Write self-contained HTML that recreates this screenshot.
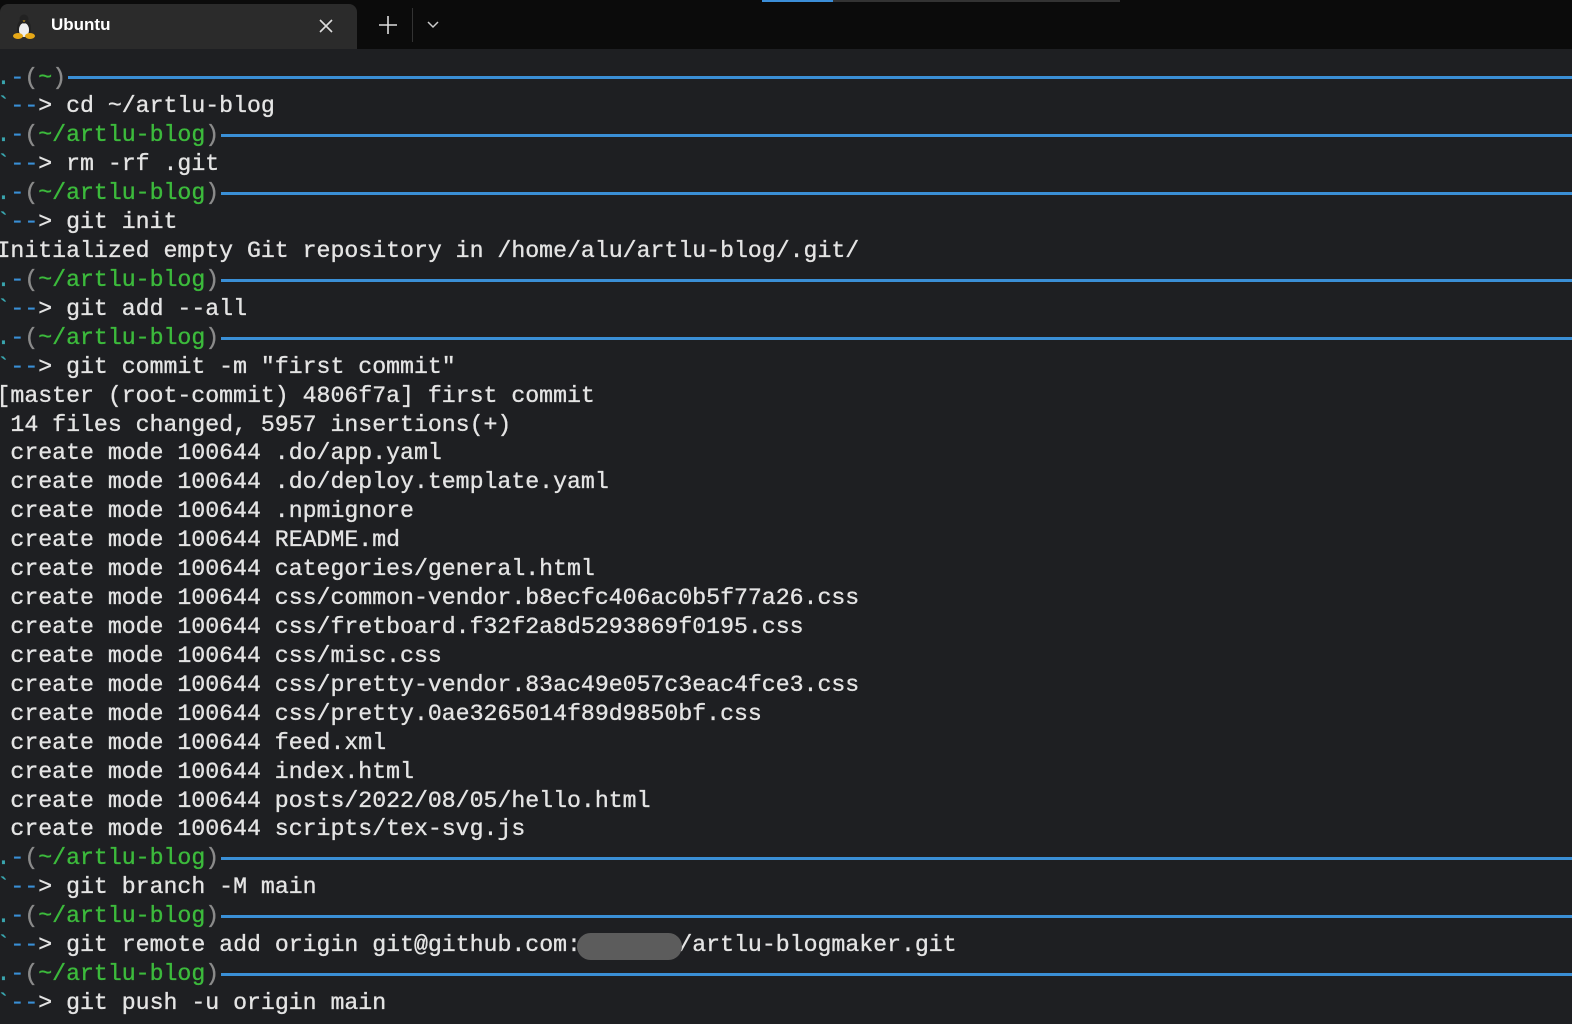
<!DOCTYPE html>
<html><head><meta charset="utf-8"><style>
html,body{margin:0;padding:0;width:1572px;height:1024px;overflow:hidden;background:#1e1f22;}
.bar{position:absolute;left:0;top:0;width:1572px;height:49px;background:#0b0b0b;}
.prog{position:absolute;top:0;height:2px;}
.tab{position:absolute;left:0;top:4px;width:357px;height:45px;background:#2b2b2b;border-radius:8px 8px 0 0;}
.tab .t{position:absolute;left:51px;top:11px;color:#fff;font:bold 17px "Liberation Sans",sans-serif;}
.term{position:absolute;left:-3.5px;top:63.5px;width:1580px;font-family:"Liberation Mono",monospace;font-size:23.2px;color:#e4e4e4;-webkit-text-stroke:0.35px #e4e4e4;}
.l{height:28.93px;line-height:28.93px;position:relative;white-space:pre;}
.p{display:flex;align-items:center;}
.p .rule{flex:1;height:3px;background:#3a8fd6;margin-left:2px;}
.c{color:#3aa7b0;-webkit-text-stroke-color:#3aa7b0}.b{color:#3a8fd6;-webkit-text-stroke-color:#3a8fd6}.g{color:#8a8a8a;-webkit-text-stroke-color:#8a8a8a}.gr{color:#3cba3c;-webkit-text-stroke-color:#3cba3c}
</style></head><body>
<div class="bar">
<div class="prog" style="left:762px;width:71px;background:#3b8ed8"></div>
<div class="prog" style="left:833px;width:287px;background:#333"></div>
<div class="tab">
<svg style="position:absolute;left:13px;top:9px" width="22" height="26" viewBox="0 0 22 26"><ellipse cx="11" cy="15" rx="7" ry="9" fill="#222"/><ellipse cx="11" cy="17" rx="5" ry="7" fill="#eee"/><circle cx="11" cy="6" r="4.5" fill="#222"/><ellipse cx="5" cy="23" rx="5" ry="3" fill="#e6a817"/><ellipse cx="17" cy="23" rx="5" ry="3" fill="#e6a817"/><path d="M9.5 7.5h3l-1.5 1.5z" fill="#e6a817"/></svg>
<div class="t">Ubuntu</div>
<svg style="position:absolute;left:318px;top:14px" width="16" height="16" viewBox="0 0 16 16"><path d="M2 2L14 14M14 2L2 14" stroke="#ddd" stroke-width="1.6"/></svg>
</div>
<svg style="position:absolute;left:378px;top:15px" width="20" height="20" viewBox="0 0 20 20"><path d="M10 1V19M1 10H19" stroke="#ddd" stroke-width="1.6"/></svg>
<div style="position:absolute;left:412px;top:8px;width:1px;height:34px;background:#333"></div>
<svg style="position:absolute;left:426px;top:20px" width="14" height="10" viewBox="0 0 14 10"><path d="M2 2L7 7L12 2" stroke="#ccc" stroke-width="1.5" fill="none"/></svg>
</div>
<div class="term"><div class="l p"><span class="c">.</span><span class="b">-</span><span class="g">(</span><span class="gr">~</span><span class="g">)</span><span class="rule"></span></div><div class="l"><span class="c">`</span><span class="b">--</span>> cd ~/artlu-blog</div><div class="l p"><span class="c">.</span><span class="b">-</span><span class="g">(</span><span class="gr">~/artlu-blog</span><span class="g">)</span><span class="rule"></span></div><div class="l"><span class="c">`</span><span class="b">--</span>> rm -rf .git</div><div class="l p"><span class="c">.</span><span class="b">-</span><span class="g">(</span><span class="gr">~/artlu-blog</span><span class="g">)</span><span class="rule"></span></div><div class="l"><span class="c">`</span><span class="b">--</span>> git init</div><div class="l">Initialized empty Git repository in /home/alu/artlu-blog/.git/</div><div class="l p"><span class="c">.</span><span class="b">-</span><span class="g">(</span><span class="gr">~/artlu-blog</span><span class="g">)</span><span class="rule"></span></div><div class="l"><span class="c">`</span><span class="b">--</span>> git add --all</div><div class="l p"><span class="c">.</span><span class="b">-</span><span class="g">(</span><span class="gr">~/artlu-blog</span><span class="g">)</span><span class="rule"></span></div><div class="l"><span class="c">`</span><span class="b">--</span>> git commit -m "first commit"</div><div class="l">[master (root-commit) 4806f7a] first commit</div><div class="l"> 14 files changed, 5957 insertions(+)</div><div class="l"> create mode 100644 .do/app.yaml</div><div class="l"> create mode 100644 .do/deploy.template.yaml</div><div class="l"> create mode 100644 .npmignore</div><div class="l"> create mode 100644 README.md</div><div class="l"> create mode 100644 categories/general.html</div><div class="l"> create mode 100644 css/common-vendor.b8ecfc406ac0b5f77a26.css</div><div class="l"> create mode 100644 css/fretboard.f32f2a8d5293869f0195.css</div><div class="l"> create mode 100644 css/misc.css</div><div class="l"> create mode 100644 css/pretty-vendor.83ac49e057c3eac4fce3.css</div><div class="l"> create mode 100644 css/pretty.0ae3265014f89d9850bf.css</div><div class="l"> create mode 100644 feed.xml</div><div class="l"> create mode 100644 index.html</div><div class="l"> create mode 100644 posts/2022/08/05/hello.html</div><div class="l"> create mode 100644 scripts/tex-svg.js</div><div class="l p"><span class="c">.</span><span class="b">-</span><span class="g">(</span><span class="gr">~/artlu-blog</span><span class="g">)</span><span class="rule"></span></div><div class="l"><span class="c">`</span><span class="b">--</span>> git branch -M main</div><div class="l p"><span class="c">.</span><span class="b">-</span><span class="g">(</span><span class="gr">~/artlu-blog</span><span class="g">)</span><span class="rule"></span></div><div class="l"><span class="c">`</span><span class="b">--</span>> git remote add origin git@github.com:       /artlu-blogmaker.git<span style="position:absolute;left:580px;top:2px;width:105px;height:27px;background:#5c5c5c;border-radius:14px;"></span></div><div class="l p"><span class="c">.</span><span class="b">-</span><span class="g">(</span><span class="gr">~/artlu-blog</span><span class="g">)</span><span class="rule"></span></div><div class="l"><span class="c">`</span><span class="b">--</span>> git push -u origin main</div></div>
</body></html>
